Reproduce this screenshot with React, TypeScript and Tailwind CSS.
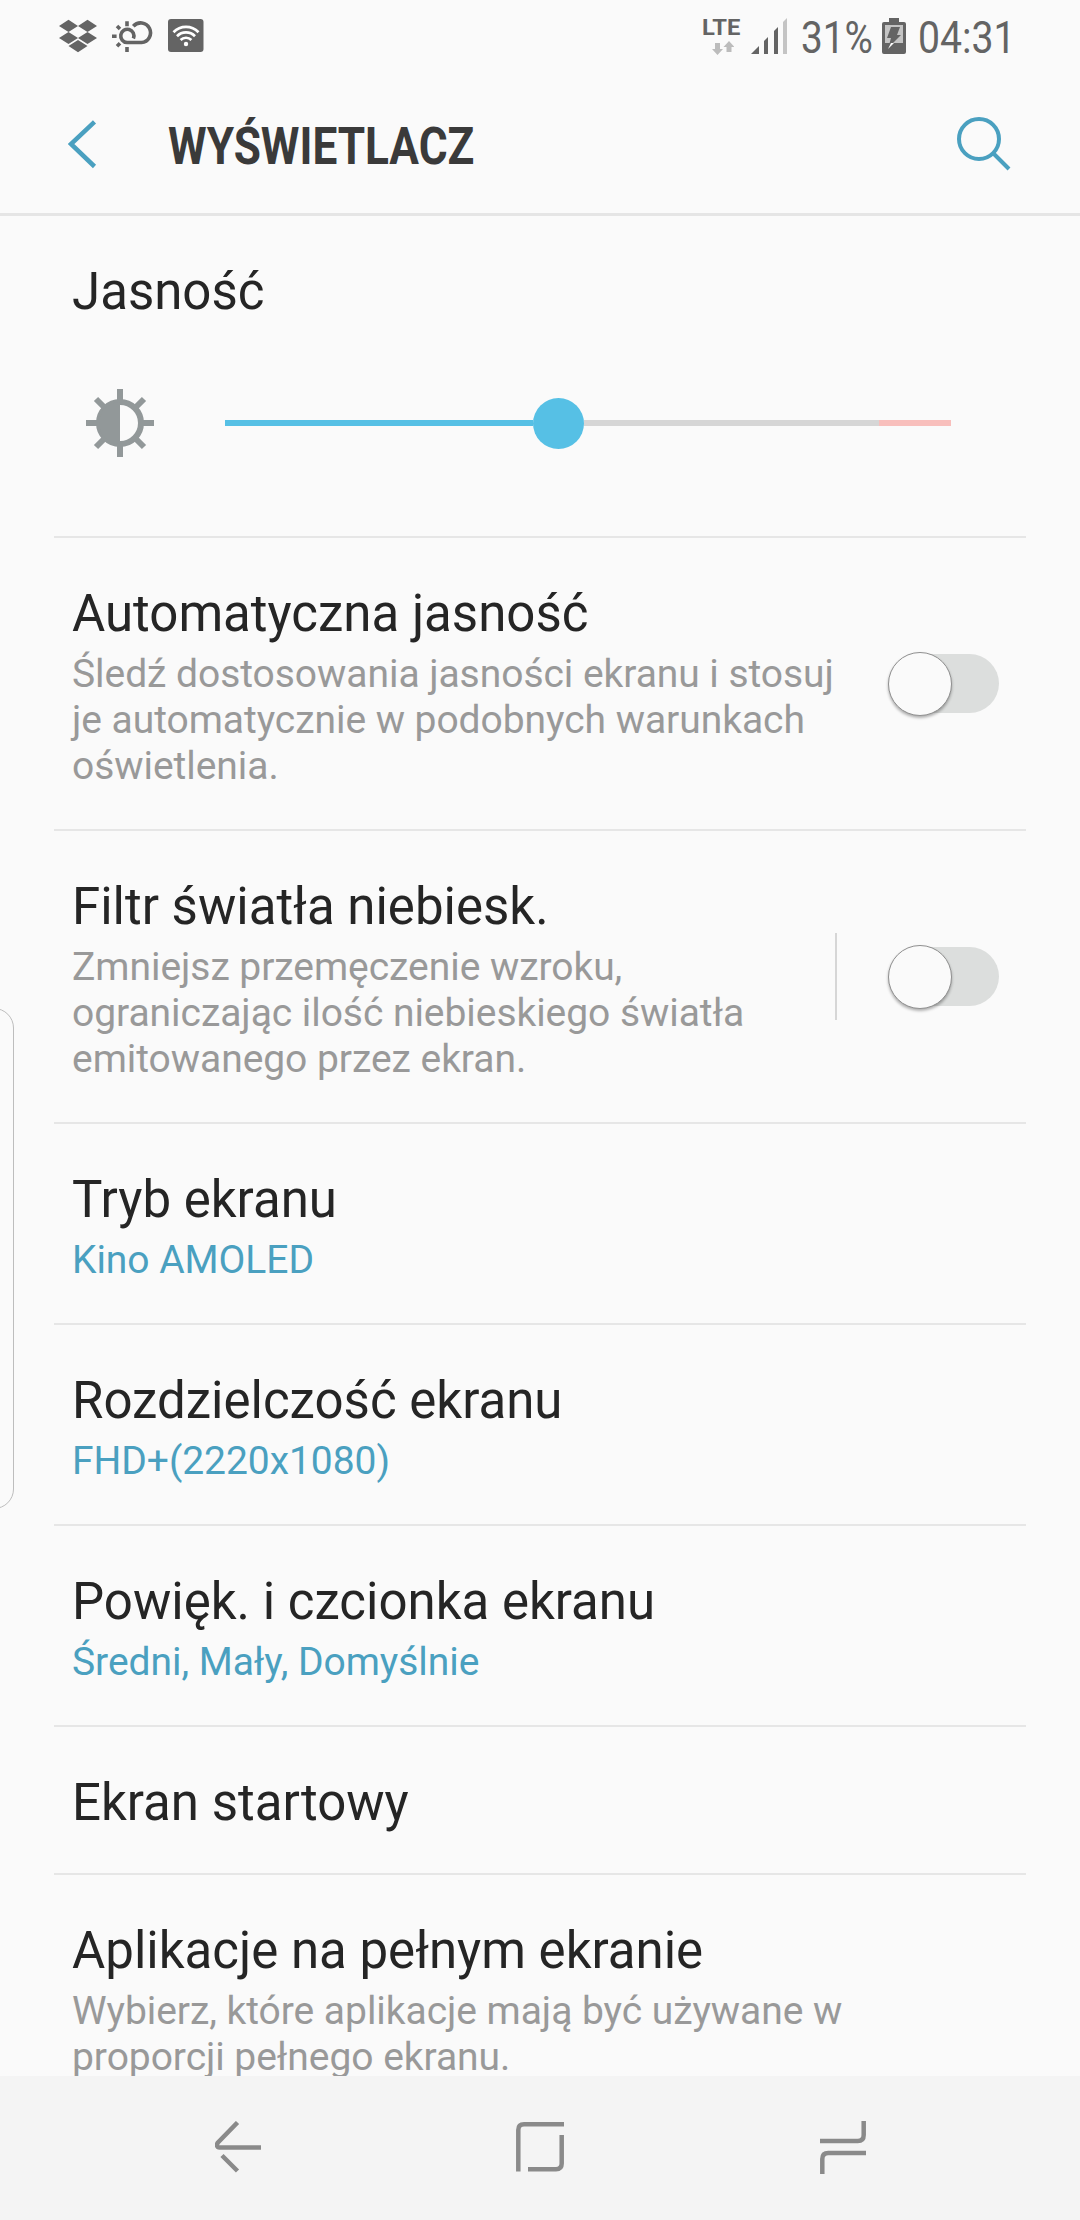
import type { ReactNode } from "react";
import { SiDropbox } from "react-icons/si";

const StatusBar = () => {
  return (
    <div className="flex flex-row items-start h-[80px] shrink-0 text-[#646464]">
      <SiDropbox className="ml-[58px] mt-[17px] w-[40px] h-[38px]" />
      <svg className="ml-[14px] mt-[18px]" width="42" height="36" viewBox="0 0 42 36" fill="none" stroke="currentColor" strokeWidth="3.6">
        <path d="M15 3.2v5M0 18.2h4.600M15 29v5M5 8.100l3 3M5 28.200l3-3" />
        <path d="M21.400 20.500a6.600 6.600 0 1 0-6.400 4h14.500a9.800 9.800 0 1 0-8.200-16.200" />
      </svg>
      <svg className="ml-[14px] mt-[19px]" width="36" height="34" viewBox="0 0 36 34" fill="none" stroke="white" strokeWidth="2.7">
        <rect width="35.500" height="33" rx="3" fill="currentColor" stroke="none" />
        <path d="M5.500 13.200a17.500 17.500 0 0 1 25 0M9 17.200a12.600 12.600 0 0 1 18 0M12.600 21a7.600 7.600 0 0 1 10.800 0" />
        <circle cx="18" cy="25" r="2.200" fill="white" stroke="none" />
      </svg>
      <div className="ml-auto w-[40px] mt-[15px]">
        <div className="w-fit origin-left scale-x-[1.08] font-bold text-[22px] leading-[26px]">LTE</div>
        <svg className="ml-[10px]" width="22" height="14" viewBox="0 0 22 14" fill="#bcbcbc">
          <path d="M3 2h5v6h3l-5.500 6L0 8h3z" />
          <path d="M14.500 11h5V6h3L17 0l-5.500 6h3z" />
        </svg>
      </div>
      <svg className="ml-[9px] mt-[18px]" width="37" height="36" viewBox="0 0 37 36" fill="currentColor">
        <path d="M0 36l8-8v8zM13 23l4-4v17h-4zM23 13l4-4v27h-4z" />
        <path d="M32 4l4-4v36h-4z" fill="#c4c4c4" />
      </svg>
      <div className="ml-[13px] mt-[11px] w-[71px] h-[53px]">
        <div className="w-fit origin-left scale-x-[0.86] text-[45px] leading-[53px]">31%</div>
      </div>
      <svg className="ml-[10px] mt-[18px]" width="24" height="36" viewBox="0 0 24 36" fill="currentColor">
        <path d="M7 0h10v4h5a2 2 0 0 1 2 2v28a2 2 0 0 1-2 2H2a2 2 0 0 1-2-2V6a2 2 0 0 1 2-2h5z" />
        <path d="M3 7h18v18H3z" fill="#c4c4c4" />
        <path d="M9 9h9l-3 8h4L11 25H12L6 31l3-11H5z" />
        <path d="M6 31l3-6h3z" fill="white" />
      </svg>
      <div className="ml-[12px] mr-[66px] mt-[11px] w-[96px] h-[53px]">
        <div className="w-fit origin-left scale-x-[0.87] text-[45px] leading-[53px]">04:31</div>
      </div>
    </div>
  );
};

const Header = () => {
  return (
    <div className="flex flex-row items-start h-[136px] shrink-0 border-b-[3px] border-[#e5e5e5]">
      <svg className="ml-[68px] mt-[40px]" width="29" height="49" viewBox="0 0 29 49" fill="none" stroke="#4aa0c0" strokeWidth="4.500">
        <path d="M26.500 1.800L3 24l23.500 22.500" />
      </svg>
      <div className="ml-[71px] mt-[37px] w-[305px]">
        <div className="w-fit origin-left scale-x-[0.866] font-bold text-[51px] leading-[60px] text-[#3a3a3a]">WYŚWIETLACZ</div>
      </div>
      <svg className="ml-auto mr-[69px] mt-[37px]" width="54" height="54" viewBox="0 0 54 54" fill="none" stroke="#4aa0c0" strokeWidth="4">
        <circle cx="22" cy="22" r="20" />
        <path d="M36.500 36.500L52 52" />
      </svg>
    </div>
  );
};

const BrightnessRow = () => {
  return (
    <div className="h-[320px] shrink-0">
      <div className="ml-[72px] pt-[46px] text-[51px] leading-[60px]">Jasność</div>
      <div className="flex flex-row items-center ml-[86px] mt-[67px] h-[68px]">
        <svg width="68" height="68" viewBox="-34 -34 68 68" fill="none" stroke="#929899" strokeWidth="6">
          <circle r="21" />
          <path d="M0-21a21 21 0 0 0 0 42z" fill="#929899" stroke="none" />
          <path d="M0-34v12M0 34V22M-34 0h12M34 0H22M-24-24l8 8M24-24l-8 8M-24 24l8-8M24 24l-8-8" />
        </svg>
        <div className="flex flex-row items-center ml-[71px] w-[726px]">
          <div className="w-[308px] h-[6px] bg-[#56c0e5]" />
          <div className="w-[51px] h-[51px] rounded-full bg-[#56c0e5]" />
          <div className="grow h-[6px] bg-[#d6d6d6]" />
          <div className="w-[72px] h-[6px] bg-[#f8bfbc]" />
        </div>
      </div>
    </div>
  );
};

const Toggle = () => {
  return (
    <div className="relative ml-auto mr-[81px] mt-px w-[111px] h-[64px] shrink-0">
      <div className="ml-[32px] mt-[2px] w-[79px] h-[59px] rounded-r-full bg-[#dcdedd]" />
      <div className="absolute left-0 top-0 w-[64px] h-[64px] rounded-full bg-[#fafafa] border border-[#909090] shadow-[0_2px_3px_rgba(0,0,0,0.3)]" />
    </div>
  );
};

const Divider = () => <div className="ml-[54px] w-[972px] h-[2px] shrink-0 bg-[#e6e6e6]" />;

type RowProps = {
  title: string;
  lines?: string[];
  blue?: boolean;
  children?: ReactNode;
};

const Row = ({ title, lines, blue, children }: RowProps) => {
  return (
    <>
      <Divider />
      <div className="flex flex-row items-center shrink-0 pl-[72px]">
        <div className="pt-[46px] pb-[40px]">
          <div className="text-[51px] leading-[60px] whitespace-nowrap">{title}</div>
          {lines && (
            <div className={`pt-[7px] text-[39px] leading-[46px] tracking-[-0.05px] ${blue ? "text-[#4aa0c0]" : "text-[#999999]"}`}>
              {lines.map((line) => (
                <div key={line} className="whitespace-nowrap">{line}</div>
              ))}
            </div>
          )}
        </div>
        {children}
      </div>
    </>
  );
};

const NavBar = () => {
  return (
    <div className="flex flex-row items-start h-[144px] shrink-0 bg-[#f4f4f4]">
      <svg className="ml-[215px] mt-[45px]" width="46" height="52" viewBox="0 0 46 52" fill="none" stroke="#8a8a8a" strokeWidth="4.500">
        <path d="M22.500 1.500L3 21.500c-2 2.500-1 5 1.500 5H46M7 34.500l15.500 15.500" />
      </svg>
      <svg className="ml-[255px] mt-[46px]" width="48" height="50" viewBox="0 0 48 50" fill="none" stroke="#8a8a8a" strokeWidth="4.500">
        <path d="M2.300 49.500V8q0-5.700 5.700-5.700h40M45.700 13v28.500q0 5.700-5.700 5.700H12" />
      </svg>
      <svg className="ml-[256px] mt-[45px]" width="46" height="53" viewBox="0 0 46 53" fill="none" stroke="#8a8a8a" strokeWidth="4.500">
        <path d="M43.700 0v14q0 6-6 6H0M2.300 53V38q0-6 6-6H46" />
      </svg>
    </div>
  );
};

const App = () => {
  return (
    <div className="relative flex flex-col w-[1080px] h-[2220px] overflow-hidden bg-[#fafafa] text-[#252525] font-['Roboto','Liberation_Sans',sans-serif]">
      <StatusBar />
      <Header />
      <div className="flex flex-col h-[1860px] shrink-0 overflow-hidden">
        <BrightnessRow />
        <Row
          title="Automatyczna jasność"
          lines={["Śledź dostosowania jasności ekranu i stosuj", "je automatycznie w podobnych warunkach", "oświetlenia."]}
        >
          <Toggle />
        </Row>
        <Row
          title="Filtr światła niebiesk."
          lines={["Zmniejsz przemęczenie wzroku,", "ograniczając ilość niebieskiego światła", "emitowanego przez ekran."]}
        >
          <div className="flex flex-row items-center ml-auto">
            <div className="mr-[51px] w-[2px] h-[87px] bg-[#d6d6d6]" />
            <Toggle />
          </div>
        </Row>
        <Row title="Tryb ekranu" lines={["Kino AMOLED"]} blue />
        <Row title="Rozdzielczość ekranu" lines={["FHD+(2220x1080)"]} blue />
        <Row title="Powięk. i czcionka ekranu" lines={["Średni, Mały, Domyślnie"]} blue />
        <Row title="Ekran startowy" />
        <Row
          title="Aplikacje na pełnym ekranie"
          lines={["Wybierz, które aplikacje mają być używane w", "proporcji pełnego ekranu."]}
        />
      </div>
      <NavBar />
      {/* edge panel handle */}
      <div className="absolute left-[-31px] top-[1008px] w-[45px] h-[501px] rounded-[20px] border border-[#bdbdbd]" />
    </div>
  );
};

export default App;
